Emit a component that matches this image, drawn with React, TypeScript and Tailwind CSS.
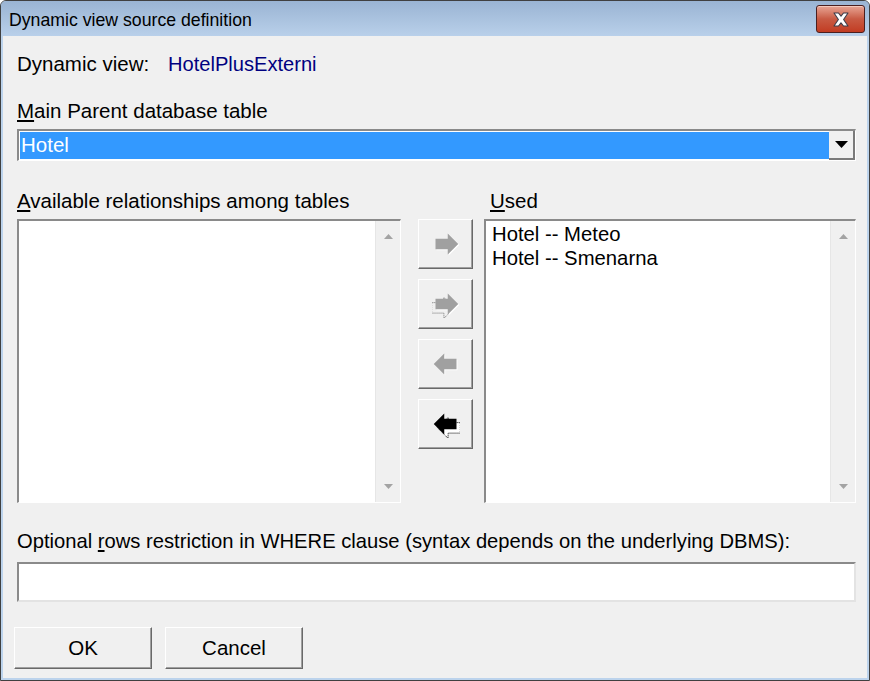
import React from 'react';

// small block arrow used on the move buttons (16 unit grid)
const RIGHT = '2,5 9,5 9,2 15,8 9,14 9,11 2,11';
const LEFT = '14,5 7,5 7,2 1,8 7,14 7,11 14,11';

const MoveIcon = ({ dir, double, active }: { dir: 'right' | 'left'; double?: boolean; active?: boolean }) => {
  const pts = dir === 'right' ? RIGHT : LEFT;
  const fill = active ? '#000000' : '#a0a0a0';
  const back = dir === 'right' ? 'translate(-2.2 2.2)' : 'translate(2.2 2.2)';
  return (
    <svg width="28" height="28" viewBox="0 0 16 16">
      {double && (
        <polygon
          points={pts}
          transform={back}
          fill={active ? '#ffffff' : 'none'}
          stroke={active ? '#000000' : '#707070'}
          strokeWidth="0.57"
          strokeDasharray="0.57 0.57"
        />
      )}
      {!active && <polygon points={pts} transform="translate(0.57 0.57)" fill="#ffffff" />}
      <polygon points={pts} fill={fill} />
    </svg>
  );
};

const ScrollArrow = ({ up }: { up?: boolean }) => (
  <svg width="9" height="5" viewBox="0 0 9 5">
    <polygon points={up ? '0,5 4.5,0 9,5' : '0,0 4.5,5 9,0'} fill="#a3a3a3" />
  </svg>
);

const ListBox = ({ items, className }: { items: string[]; className: string }) => (
  <div
    className={`${className} h-[284px] flex border-t-2 border-l-2 border-t-[#8a8a8a] border-l-[#8a8a8a] border-b border-r border-b-white border-r-white bg-white`}
  >
    <div className="flex-1 pl-[6px] pt-[1px] text-[20.3px] leading-[24px] text-black">
      {items.map((it) => (
        <div key={it}>{it}</div>
      ))}
    </div>
    <div className="w-[25px] flex flex-col items-center justify-between py-[13px] bg-[#f0f0f0] border-l border-[#e6e6e6]">
      <ScrollArrow up />
      <ScrollArrow />
    </div>
  </div>
);

const RaisedButton = ({ children, className }: { children: React.ReactNode; className: string }) => (
  <div
    className={`${className} flex items-center justify-center bg-[#f0f0f0] border-t border-l border-t-white border-l-white border-b border-r border-b-[#696969] border-r-[#696969] shadow-[inset_-1px_-1px_0_#a0a0a0]`}
  >
    {children}
  </div>
);

const App = () => {
  return (
    <div className="w-[870px] h-[681px] flex flex-col bg-[#bcd3ec] border border-[#404040] rounded-t-[6px] overflow-hidden font-['Liberation_Sans',Arial,sans-serif] text-black">
      {/* title bar */}
      <div className="h-[35px] flex items-start justify-between bg-gradient-to-b from-[#9ab4d3] to-[#b9d0ea] pl-[8px] pr-[4px]">
        <span className="mt-[8px] text-[17.7px] leading-[22px] text-black">Dynamic view source definition</span>
        <div className="mt-[4px] w-[49px] h-[28px] flex items-center justify-center rounded-[3px] border border-[#4b1f1f] bg-gradient-to-b from-[#e7a595] via-[#c85a43] to-[#c23b21] shadow-[inset_0_1px_0_#f5c9bc]">
          <svg width="20" height="15" viewBox="0 0 20 15">
            <path
              d="M3 1 H7.5 L10 4.2 L12.5 1 H17 L12.6 7.5 L17 14 H12.5 L10 10.8 L7.5 14 H3 L7.4 7.5 Z"
              fill="#ffffff"
              stroke="#3d3d4a"
              strokeWidth="1.1"
              strokeLinejoin="round"
            />
          </svg>
        </div>
      </div>

      {/* client area */}
      <div className="flex-1 mx-[2px] mb-[2px] bg-[#f0f0f0] pt-[16px] pl-[14px] pr-[11px] flex flex-col text-[20.5px] leading-[24px]">
        <div className="flex">
          <span className="w-[151px]">Dynamic view:</span>
          <span className="text-[#000080] text-[20.1px]">HotelPlusExterni</span>
        </div>

        <div className="mt-[23px]">
          <span className="underline underline-offset-[2px]">M</span>ain Parent database table
        </div>
        <div className="mt-[6px] h-[32px] flex border-t-2 border-l-2 border-t-[#8a8a8a] border-l-[#8a8a8a] border-b border-r border-b-white border-r-white bg-white">
          <div className="flex-1 my-[1px] ml-[1px] bg-[#3399ff] text-white pl-[1px] leading-[26px]">Hotel</div>
          <div className="w-[26px] flex items-center justify-center bg-[#f0f0f0] border-b-2 border-r-2 border-[#7a7a7a]">
            <svg width="13" height="7" viewBox="0 0 13 7">
              <polygon points="0,0 13,0 6.5,7" fill="#000000" />
            </svg>
          </div>
        </div>

        <div className="mt-[28px] flex">
          <span className="w-[473px]">
            <span className="underline underline-offset-[2px]">A</span>vailable relationships among tables
          </span>
          <span>
            <span className="underline underline-offset-[2px]">U</span>sed
          </span>
        </div>
        <div className="mt-[6px] flex">
          <ListBox items={[]} className="w-[384px]" />
          <div className="ml-[17px] w-[55px] flex flex-col gap-[10px]">
            <RaisedButton className="h-[50px]">
              <MoveIcon dir="right" />
            </RaisedButton>
            <RaisedButton className="h-[50px]">
              <MoveIcon dir="right" double />
            </RaisedButton>
            <RaisedButton className="h-[50px]">
              <MoveIcon dir="left" />
            </RaisedButton>
            <RaisedButton className="h-[50px]">
              <MoveIcon dir="left" double active />
            </RaisedButton>
          </div>
          <ListBox items={['Hotel -- Meteo', 'Hotel -- Smenarna']} className="ml-[11px] flex-1" />
        </div>

        <div className="mt-[26px] text-[20.2px]">
          Optional <span className="underline underline-offset-[2px]">r</span>ows restriction in WHERE clause (syntax
          depends on the underlying DBMS):
        </div>
        <div className="mt-[9px] h-[40px] border-t-2 border-l-2 border-t-[#8a8a8a] border-l-[#8a8a8a] border-b-2 border-r-2 border-b-[#e3e3e3] border-r-[#e3e3e3] bg-white" />

        <div className="mt-[25px] -ml-[3px] flex gap-[13px]">
          <RaisedButton className="w-[138px] h-[42px]">OK</RaisedButton>
          <RaisedButton className="w-[138px] h-[42px]">Cancel</RaisedButton>
        </div>
      </div>
    </div>
  );
};

export default App;
